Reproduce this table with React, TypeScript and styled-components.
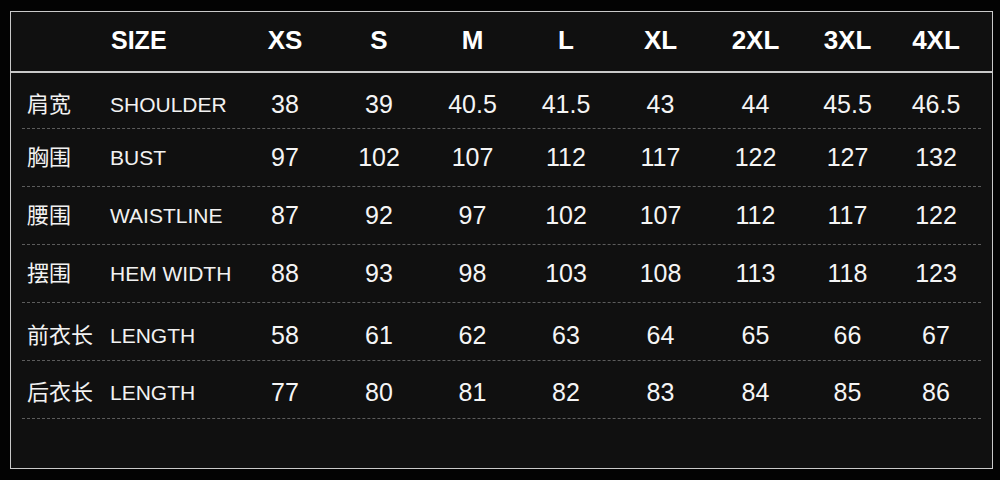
import React from 'react';
import styled, { createGlobalStyle } from 'styled-components';

const GlobalStyle = createGlobalStyle`
    html, body {
        margin: 0;
        padding: 0;
        background: #030303;
    }
    body {
        width: 1000px;
        height: 480px;
        overflow: hidden;
        font-family: 'Liberation Sans', Arial, 'Noto Sans CJK SC', sans-serif;
        color: #fff;
    }
`;

const Panel = styled.div`
    margin: 11px 0 0 10px;
    width: 981px;
    height: 456px;
    border: 1px solid #c9c9c9;
    background-color: #101010;
    box-sizing: content-box;
`;

const COLUMNS = '88px 128px 94px 94px 93px 94px 95px 95px 89px 88px';

const Header = styled.div`
    display: grid;
    grid-template-columns: ${COLUMNS};
    align-items: center;
    height: 59px;
    padding: 0 11px;
    border-bottom: 2px solid #c9c9c9;
    font-size: 26px;
    font-weight: bold;

    .title {
        grid-column: 2;
        font-size: 25px;
        padding-left: 1px;
        margin-top: -2px;
    }

    .size {
        text-align: center;
        margin-top: -2px;
    }
`;

const Body = styled.div`
    margin: 0 11px;
`;

const Row = styled.div<{ $height: number; $offset: number }>`
    display: grid;
    grid-template-columns: ${COLUMNS};
    align-items: center;
    height: ${(p) => p.$height}px;
    box-sizing: border-box;
    padding-top: ${(p) => p.$offset * 2}px;
    border-bottom: 1px dashed #5c5c5c;

    .zh {
        padding-left: 5px;
        margin-top: -5px;
        font-family: 'Noto Sans CJK SC', sans-serif;
        font-size: 22px;
        line-height: 1;
        color: #f2f2f2;
        white-space: nowrap;
    }

    .en {
        font-size: 21px;
        color: #f2f2f2;
        white-space: nowrap;
    }

    .num {
        text-align: center;
        font-size: 25px;
        color: #f5f5f5;
    }
`;

const sizes = ['XS', 'S', 'M', 'L', 'XL', '2XL', '3XL', '4XL'];

const rows = [
    { zh: '肩宽', en: 'SHOULDER', values: ['38', '39', '40.5', '41.5', '43', '44', '45.5', '46.5'], height: 56, offset: 4 },
    { zh: '胸围', en: 'BUST', values: ['97', '102', '107', '112', '117', '122', '127', '132'], height: 58, offset: 0 },
    { zh: '腰围', en: 'WAISTLINE', values: ['87', '92', '97', '102', '107', '112', '117', '122'], height: 58, offset: 0 },
    { zh: '摆围', en: 'HEM WIDTH', values: ['88', '93', '98', '103', '108', '113', '118', '123'], height: 58, offset: 0 },
    { zh: '前衣长', en: 'LENGTH', values: ['58', '61', '62', '63', '64', '65', '66', '67'], height: 58, offset: 4 },
    { zh: '后衣长', en: 'LENGTH', values: ['77', '80', '81', '82', '83', '84', '85', '86'], height: 58, offset: 3 },
];

const App = () => {
    return (
        <>
            <GlobalStyle />
            <Panel>
                <Header>
                    <div className='title'>SIZE</div>
                    {sizes.map((s) => (
                        <div className='size' key={s}>
                            {s}
                        </div>
                    ))}
                </Header>
                <Body>
                    {rows.map((r, i) => (
                        <Row key={i} $height={r.height} $offset={r.offset}>
                            <div className='zh'>{r.zh}</div>
                            <div className='en'>{r.en}</div>
                            {r.values.map((v, j) => (
                                <div className='num' key={j}>
                                    {v}
                                </div>
                            ))}
                        </Row>
                    ))}
                </Body>
            </Panel>
        </>
    );
};

export default App;
